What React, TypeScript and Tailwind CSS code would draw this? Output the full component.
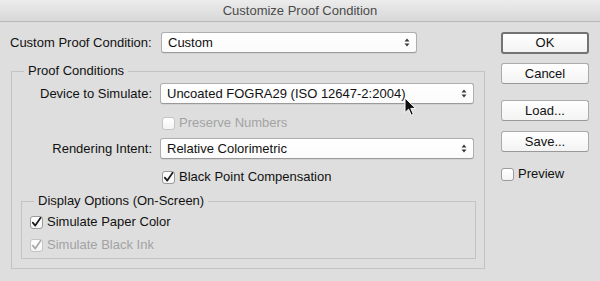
import React from 'react';

const Arrows: React.FC = () => (
  <svg width="6" height="9" viewBox="0 0 6 9" className="shrink-0">
    <path d="M3 0.5 L5.5 3.5 L0.5 3.5 Z" fill="#3a3a3a" />
    <path d="M3 8.5 L5.5 5.5 L0.5 5.5 Z" fill="#3a3a3a" />
  </svg>
);

const Select: React.FC<{ value: string; width: string; height?: string }> = ({ value, width, height = 'h-[21px]' }) => (
  <div
    className={`${width} ${height} flex items-center justify-between pl-[6px] pr-[6px] bg-gradient-to-b from-white to-[#fbfbfb] border border-[#aeaeae] border-b-[#9a9a9a] rounded-[3px] shadow-[0_1px_0_rgba(0,0,0,0.05)] text-[#111]`}
  >
    <span>{value}</span>
    <Arrows />
  </div>
);

const Checkbox: React.FC<{ checked?: boolean; disabled?: boolean; label: string }> = ({ checked, disabled, label }) => (
  <div className="flex items-center h-[16px]">
    <div
      className={`w-[13px] h-[13px] rounded-[3px] border bg-gradient-to-b from-white to-[#f4f4f4] flex items-center justify-center ${
        disabled ? 'border-[#c4c4c4]' : 'border-[#9b9b9b]'
      }`}
    >
      {checked && (
        <svg width="13" height="13" viewBox="0 0 13 13" className="overflow-visible">
          <path
            d="M2.8 6.6 L5.3 9.6 L10.6 1.8"
            fill="none"
            stroke={disabled ? '#a9a9a9' : '#1a1a1a'}
            strokeWidth="1.7"
            strokeLinecap="round"
            strokeLinejoin="round"
          />
        </svg>
      )}
    </div>
    <span className={`ml-[4px] ${disabled ? 'text-[#a3a3a3]' : 'text-[#111]'}`}>{label}</span>
  </div>
);

const Button: React.FC<{ label: string; primary?: boolean }> = ({ label, primary }) => (
  <div
    className={`w-[88px] flex items-center justify-center rounded-[3px] bg-gradient-to-b from-white to-[#f3f3f3] text-[#111] ${
      primary ? 'h-[22px] border-2 border-[#737373]' : 'h-[21px] border border-[#ababab] border-b-[#999]'
    }`}
  >
    {label}
  </div>
);

const App: React.FC = () => {
  return (
    <div className="relative w-[600px] h-[281px] overflow-hidden bg-[#dedede] flex flex-col font-['Liberation_Sans',Arial,sans-serif] text-[13px] leading-[16px]">
      {/* title bar */}
      <div className="h-[22px] shrink-0 flex items-center justify-center bg-gradient-to-b from-[#ececec] to-[#d8d8d8] border-b border-[#b9b9b9] text-[#4b4b4b]">
        Customize Proof Condition
      </div>

      <div className="flex flex-1 pt-[10px]">
        {/* left side */}
        <div className="w-[501px] pl-[10px] flex flex-col">
          <div className="flex items-center">
            <span className="w-[143px] text-[#111]">Custom Proof Condition:</span>
            <div className="ml-[8px]">
              <Select value="Custom" width="w-[256px]" />
            </div>
          </div>

          <fieldset className="ml-[1px] mt-[10px] w-[474px] border border-[#c3c3c3] px-0 pb-[9px]">
            <legend className="ml-[12px] px-[4px] text-[#111]">Proof Conditions</legend>
            <div className="flex flex-col mt-[4px]">
              <div className="flex items-center">
                <span className="w-[140px] text-right text-[#111]">Device to Simulate:</span>
                <div className="ml-[8px]">
                  <Select value="Uncoated FOGRA29 (ISO 12647-2:2004)" width="w-[314px]" />
                </div>
              </div>
              <div className="ml-[150px] mt-[11px]">
                <Checkbox disabled label="Preserve Numbers" />
              </div>
              <div className="flex items-center mt-[7px]">
                <span className="w-[140px] text-right text-[#111]">Rendering Intent:</span>
                <div className="ml-[8px]">
                  <Select value="Relative Colorimetric" width="w-[314px]" />
                </div>
              </div>
              <div className="ml-[150px] mt-[10px]">
                <Checkbox checked label="Black Point Compensation" />
              </div>

              <fieldset className="ml-[9px] mt-[8px] w-[455px] border border-[#c3c3c3] px-0 pb-[5px]">
                <legend className="ml-[12px] px-[4px] text-[#111]">Display Options (On-Screen)</legend>
                <div className="flex flex-col pl-[8px] mt-[5px]">
                  <Checkbox checked label="Simulate Paper Color" />
                  <div className="mt-[7px]">
                    <Checkbox checked disabled label="Simulate Black Ink" />
                  </div>
                </div>
              </fieldset>
            </div>
          </fieldset>
        </div>

        {/* right side */}
        <div className="w-[88px] flex flex-col">
          <Button label="OK" primary />
          <div className="mt-[9px]">
            <Button label="Cancel" />
          </div>
          <div className="mt-[16px]">
            <Button label="Load..." />
          </div>
          <div className="mt-[10px]">
            <Button label="Save..." />
          </div>
          <div className="mt-[14px]">
            <Checkbox label="Preview" />
          </div>
        </div>
      </div>

      {/* mouse pointer */}
      <svg className="absolute left-[404px] top-[97px]" width="13" height="20" viewBox="0 0 13 20">
        <path
          d="M1 1 L1 15.5 L4.6 12.2 L7.2 18.2 L9.4 17.3 L6.8 11.4 L11.6 11.4 Z"
          fill="#111"
          stroke="#fff"
          strokeWidth="1"
          strokeLinejoin="round"
        />
      </svg>
    </div>
  );
};

export default App;
